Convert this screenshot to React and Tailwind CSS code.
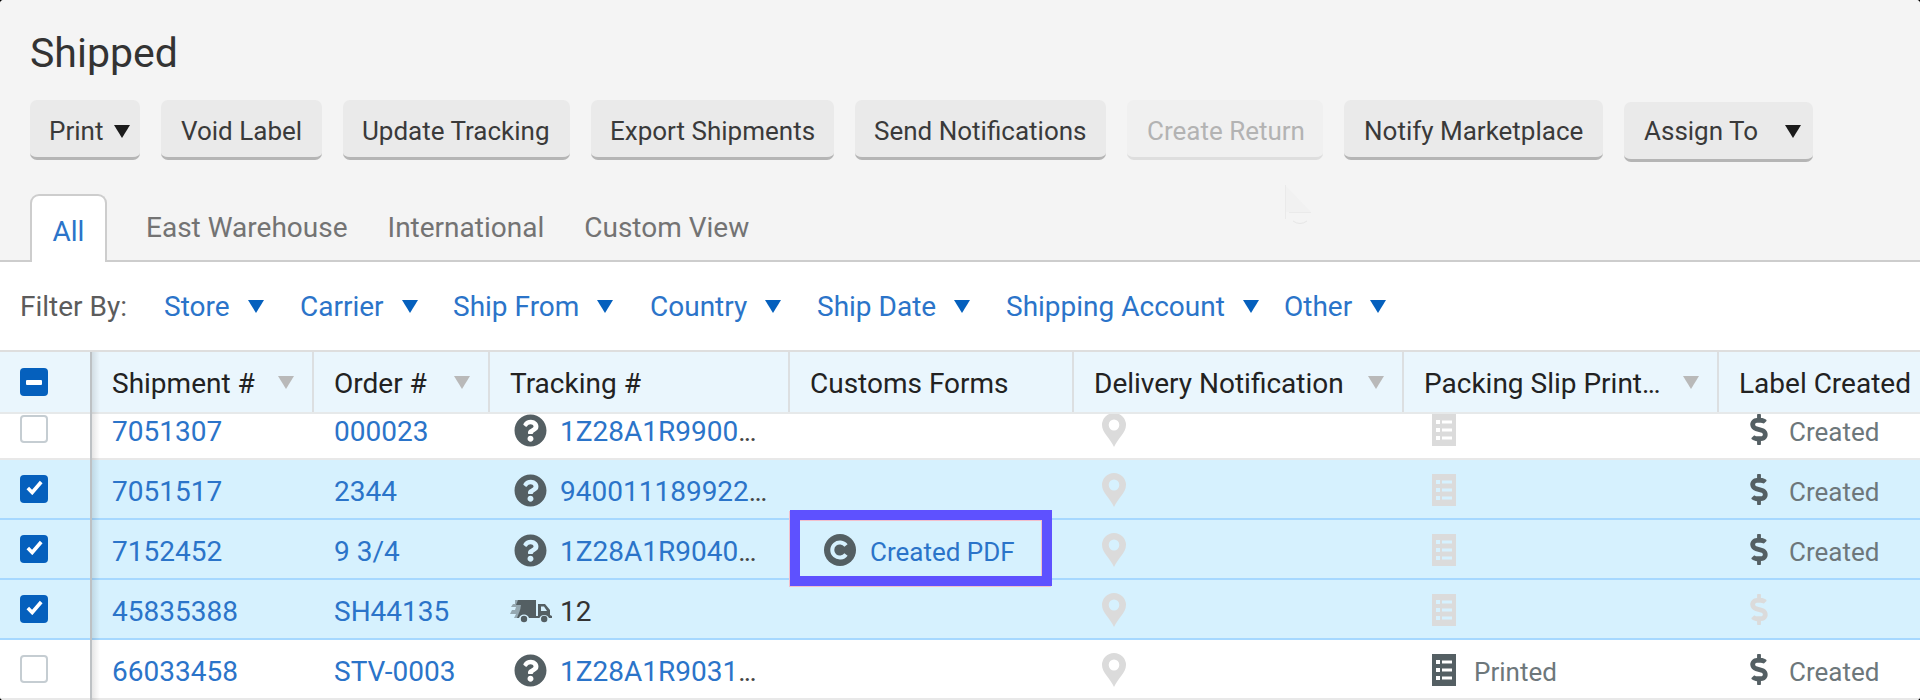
import { FaDollarSign } from "react-icons/fa";

/* ================= DATA ================= */

const ACTIONS = [
  { label: "Print", caret: true, width: "w-[110px]", pad: "pl-[19px]", gap: "ml-[11px]" },
  { label: "Void Label", width: "w-[161px]", pad: "pl-[20px]" },
  { label: "Update Tracking", width: "w-[227px]", pad: "pl-[19px]" },
  { label: "Export Shipments", width: "w-[243px]", pad: "pl-[19px]" },
  { label: "Send Notifications", width: "w-[251px]", pad: "pl-[19px]" },
  { label: "Create Return", width: "w-[196px]", pad: "pl-[20px]", disabled: true },
  { label: "Notify Marketplace", width: "w-[259px]", pad: "pl-[20px]" },
  { label: "Assign To", caret: true, width: "w-[189px]", pad: "pl-[20px]", gap: "ml-[27px]", low: true },
];

const TABS = ["East Warehouse", "International", "Custom View"];

const FILTERS = [
  { label: "Store", width: "w-[136px]" },
  { label: "Carrier", width: "w-[153px]" },
  { label: "Ship From", width: "w-[197px]" },
  { label: "Country", width: "w-[167px]" },
  { label: "Ship Date", width: "w-[189px]" },
  { label: "Shipping Account", width: "w-[278px]" },
  { label: "Other", width: "w-[136px]" },
];

const COLUMNS = [
  { label: "Shipment #", sort: true },
  { label: "Order #", sort: true },
  { label: "Tracking #" },
  { label: "Customs Forms" },
  { label: "Delivery Notification", sort: true },
  { label: "Packing Slip Print", cut: true, sort: true },
  { label: "Label Created" },
];

const ROWS = [
  { id: "7051307", order: "000023", tracking: "1Z28A1R9900", label: true },
  { id: "7051517", order: "2344", tracking: "940011189922", label: true, selected: true },
  { id: "7152452", order: "9 3/4", tracking: "1Z28A1R9040", label: true, selected: true, customs: true },
  { id: "45835388", order: "SH44135", packages: "12", selected: true },
  { id: "66033458", order: "STV-0003", tracking: "1Z28A1R9031", label: true, printed: true },
];

const GRID = "grid grid-cols-[92px_222px_176px_300px_284px_330px_315px_201px]";

/* ================= PAGE ================= */

export default function App() {
  return (
    <div className="h-[700px] w-[1920px] overflow-hidden bg-black font-['Roboto',sans-serif]">
      <div className="flex h-full flex-col overflow-hidden rounded-[4px] bg-white">
        <Header />
        <Filters />
        <Shipments />
      </div>
    </div>
  );
}

/* ================= HEADER ================= */

function Header() {
  return (
    <header className="relative flex h-[262px] shrink-0 flex-col bg-[#f4f4f4]">
      <h1 className="ml-[30px] mt-[29px] h-[71px] text-[41px] leading-[48px] text-[#333]">Shipped</h1>
      <div className="ml-[30px] flex h-[62px] items-start gap-[21px]">
        {ACTIONS.map((a) => (
          <ActionButton key={a.label} {...a} />
        ))}
      </div>
      <nav className="mt-auto flex h-[68px] text-[28px] text-[#737373]">
        <div className="w-[30px] border-b-2 border-[#cdcdcd]" />
        <div className="flex w-[77px] items-center justify-center rounded-t-[9px] border-2 border-b-0 border-[#cdcdcd] bg-white pt-[5px] text-[#2b74c9]">
          All
        </div>
        <div className="flex grow items-center gap-[40px] border-b-2 border-[#cdcdcd] pl-[39px] pt-[2px]">
          {TABS.map((t) => (
            <span key={t}>{t}</span>
          ))}
        </div>
      </nav>
      <GhostCursor />
    </header>
  );
}

function ActionButton({ label, caret, width, pad, gap, disabled, low }) {
  return (
    <button
      className={`flex h-[60px] shrink-0 items-center whitespace-nowrap rounded-[7px] border-b-[3px] text-[26px] ${width} ${pad} ${
        low ? "mt-[2px] pt-[2px]" : "pt-[6px]"
      } ${disabled ? "border-[#dedede] bg-[#f0f0f0] text-[#b3b3b3]" : "border-[#b5b5b5] bg-[#eaeaea] text-[#3a3a3a]"}`}
    >
      {label}
      {caret && <Caret className={`${gap} text-[#1b1b1b]`} />}
    </button>
  );
}

/* ================= FILTERS ================= */

function Filters() {
  return (
    <div className="flex h-[90px] shrink-0 items-center border-b-2 border-[#dedede] pt-[2px] text-[28px] text-[#2b74c9]">
      <span className="w-[164px] pl-[20px] text-[#5c5c5c]">Filter By:</span>
      {FILTERS.map((f) => (
        <span key={f.label} className={`flex shrink-0 items-center whitespace-nowrap ${f.width}`}>
          {f.label}
          <Caret className="mb-[2px] ml-[18px] text-[#0560bd]" />
        </span>
      ))}
    </div>
  );
}

/* ================= TABLE ================= */

function Shipments() {
  return (
    <div className="relative grow text-[28px]">
      <div className={`${GRID} h-[62px] border-b-2 border-[#e6e9ea] bg-[#eaf6fd] text-[#222]`}>
        <div className="flex items-center pl-[20px]">
          <Checkbox partial />
        </div>
        {COLUMNS.map((c, i) => (
          <div
            key={c.label}
            className={`flex items-center justify-between whitespace-nowrap pl-[20px] pr-[18px] ${
              i < COLUMNS.length - 1 ? "border-r-2 border-[#dcdfe1]" : ""
            }`}
          >
            <span className="pt-[3px]">
              {c.label}
              {c.cut && <Dots />}
            </span>
            {c.sort && <Caret className="text-[#b9b9b9]" />}
          </div>
        ))}
      </div>
      {/* the list is scrolled, so its first row is cut by the header */}
      <div className="flex h-[286px] flex-col justify-end overflow-hidden">
        {ROWS.map((r) => (
          <Row key={r.id} {...r} />
        ))}
      </div>
      {/* edge of the pinned checkbox column */}
      <div className="absolute left-[90px] top-0 h-full w-[10px] border-l-2 border-[#bdc1c4] bg-linear-to-r from-black/10 to-transparent" />
      <div className="absolute left-[790px] top-[158px] h-[76px] w-[262px] border-[10px] border-[#5e51ff] shadow-[-1px_1px_0_#f3bfcb,inset_-1px_1px_0_#f3bfcb]" />
    </div>
  );
}

function Row({ id, order, tracking, packages, selected, customs, printed, label }) {
  return (
    <div
      className={`${GRID} h-[60px] shrink-0 items-center border-b-2 pt-[2px] text-[#2b74c9] ${
        selected ? "border-[#a6d8ff] bg-[#d6f1fe]" : "border-[#e8e8e8] bg-white"
      }`}
    >
      <div className="pb-[3px] pl-[20px]">
        <Checkbox checked={selected} />
      </div>
      <div className="pl-[20px] pt-[3px]">{id}</div>
      <div className="pl-[20px] pt-[3px]">{order}</div>
      <div className="flex items-center">
        {packages ? (
          <>
            <Truck />
            <span className="ml-[8px] pt-[3px] text-[#333]">{packages}</span>
          </>
        ) : (
          <>
            <Question />
            <span className="ml-[13px] pt-[3px]">{tracking}</span>
            <span className="pt-[3px] text-[#444]">
              <Dots />
            </span>
          </>
        )}
      </div>
      <div className="flex items-center pl-[34px] text-[26px]">
        {customs && (
          <>
            <CircleC />
            <span className="ml-[14px] pt-[4px]">Created PDF</span>
          </>
        )}
      </div>
      <div className="pl-[28px]">
        <Pin />
      </div>
      <div className={`flex items-center pl-[28px] text-[26px] ${printed ? "text-[#545f63]" : "text-[#dbdbdb]"}`}>
        <Slip />
        {printed && <span className="ml-[18px] pt-[4px] text-[#6d777b]">Printed</span>}
      </div>
      <div className={`flex items-center pl-[30px] text-[26px] ${label ? "text-[#545f63]" : "text-[#dbdbdb]"}`}>
        <FaDollarSign className="mb-[1px] h-[31px] w-[20px]" />
        {label && <span className="ml-[20px] pt-[4px] text-[#6d777b]">Created</span>}
      </div>
    </div>
  );
}

/* ================= PARTS ================= */

function Dots() {
  return <span className="tracking-[-1.7px]">...</span>;
}

function Checkbox({ checked, partial }) {
  return (
    <div
      className={`flex h-[28px] w-[28px] items-center justify-center rounded-[4px] ${
        checked || partial ? "bg-[#0560bd]" : "border-2 border-[#c5cdd2] bg-white"
      }`}
    >
      {checked && (
        <svg viewBox="0 0 17 15" className="mb-[2px] h-[15px] w-[17px]">
          <path d="M1.800 8l4.400 4.500L15.200 2" fill="none" stroke="#fff" strokeWidth="3.600" />
        </svg>
      )}
      {partial && <div className="h-[5px] w-[16px] rounded-[1px] bg-white" />}
    </div>
  );
}

function Caret({ className = "" }) {
  return (
    <svg viewBox="0 0 16 13" className={`h-[13px] w-[16px] shrink-0 ${className}`}>
      <path d="M0 0h16L8 13z" fill="currentColor" />
    </svg>
  );
}

function Question() {
  return (
    <svg viewBox="0 0 512 512" className="ml-[24px] h-[33px] w-[33px] shrink-0">
      <path
        fill="#545f63"
        d="M504 256c0 137-111 248-248 248S8 393 8 256 119 8 256 8s248 111 248 248zM262.700 90c-54.500 0-89.200 23-116.500 63.800-3.500 5.300-2.400 12.400 2.700 16.300l34.700 26.300c5.200 3.900 12.600 3 16.700-2.100 17.900-22.700 30.100-35.800 57.300-35.800 20.400 0 45.700 13.100 45.700 33 0 15-12.400 22.700-32.500 34C247.100 238.500 216 254.900 216 296v4c0 6.600 5.400 12 12 12h56c6.600 0 12-5.400 12-12v-1.300c0-28.500 83.200-29.600 83.200-106.700 0-58-60.200-102-116.500-102zM256 338c-25.400 0-46 20.600-46 46s20.600 46 46 46 46-20.600 46-46-20.600-46-46-46z"
      />
    </svg>
  );
}

function CircleC() {
  return (
    <svg viewBox="0 0 32 32" className="h-[32px] w-[32px] shrink-0">
      <circle cx="16" cy="16" r="16" fill="#545f63" />
      <path d="M22 11.500A7.600 7.600 0 1 0 22 20.500" fill="none" stroke="#d6f1fe" strokeWidth="4" />
    </svg>
  );
}

function Pin() {
  return (
    <svg viewBox="0 0 24 34" className="mb-[1px] h-[34px] w-[24px] text-[#dbdbdb]">
      <path
        fill="currentColor"
        fillRule="evenodd"
        d="M12 0a12 12 0 0 1 12 12c0 4-2 7-4.500 10.500C16 27 13.500 31 12 34c-1.500-3-4-7-7.500-11.500C2 19 0 16 0 12A12 12 0 0 1 12 0zM12 6.500a5.300 5.500 0 1 0 0 11 5.300 5.500 0 0 0 0-11z"
      />
    </svg>
  );
}

function Slip() {
  return (
    <svg viewBox="0 0 24 32" className="h-[32px] w-[24px] shrink-0">
      <path
        fill="currentColor"
        fillRule="evenodd"
        d="M0 0h24v32H0zM4 6v4h4V6zM10 6.500v3h10v-3zM4 14v4h4v-4zM10 14.500v3h10v-3zM4 22v4h4v-4zM10 22.500v3h10v-3z"
      />
    </svg>
  );
}

function Truck() {
  return (
    <svg viewBox="0 0 42 23" className="ml-[20px] mt-[2px] h-[23px] w-[42px] shrink-0">
      <path d="M5 0h8l-5 18H4l2-4H0l2-4h3l1-3H1l2-3h2z" fill="#545f63" opacity=".5" />
      <path
        fill="#545f63"
        fillRule="evenodd"
        d="M8 0h18v18h-7a5.300 5.300 0 0 0-10 0H7l3-8 1-5H6zM28 4h7l5 6v5l2 1v2h-3a5.300 5.300 0 0 0-9.600 0H26v-2h2zM31 6.500V11h6l-3-4.500z"
      />
      <circle cx="14" cy="19" r="3.200" fill="#545f63" />
      <circle cx="34.200" cy="19" r="3.200" fill="#545f63" />
    </svg>
  );
}

/* faint trace of a pointer as it fades out */
function GhostCursor() {
  return (
    <svg viewBox="0 0 28 42" className="absolute left-[1285px] top-[184px] h-[42px] w-[28px]">
      <path d="M0 1l26 27H1v7z" fill="#f1f1f1" />
      <path d="M.5 1v34M4 28.500h22" stroke="#eaeaea" fill="none" />
      <path d="M8 37q7 5 14 0" stroke="#e6e6e6" fill="none" />
    </svg>
  );
}
